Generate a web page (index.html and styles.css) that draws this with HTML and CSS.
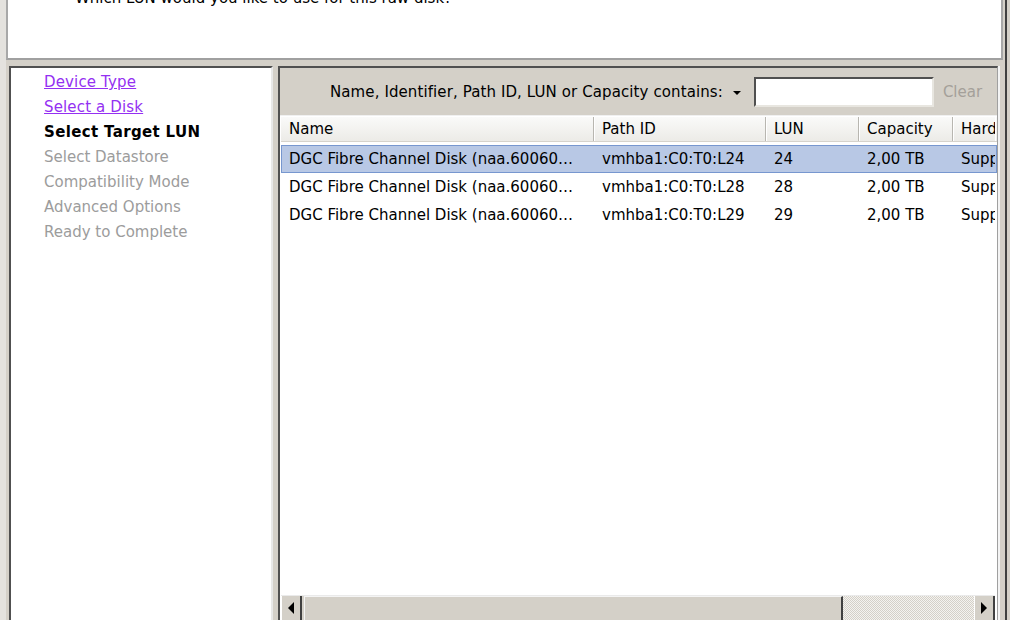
FILE: index.html
```html
<!DOCTYPE html>
<html>
<head>
<meta charset="utf-8">
<link rel="stylesheet" href="styles.css">
</head>
<body>
<div class="window">
  <header class="header">
    <p class="question">Which LUN would you like to use for this raw disk?</p>
  </header>
  <div class="main">
    <nav class="steps">
      <a class="step link" href="#">Device Type</a>
      <a class="step link" href="#">Select a Disk</a>
      <span class="step current">Select Target LUN</span>
      <span class="step disabled">Select Datastore</span>
      <span class="step disabled">Compatibility Mode</span>
      <span class="step disabled">Advanced Options</span>
      <span class="step disabled">Ready to Complete</span>
    </nav>
    <section class="panel">
      <div class="filterbar">
        <span class="filter-label">Name, Identifier, Path ID, LUN or Capacity contains:</span>
        <span class="dropdown-arrow"></span>
        <input class="filter-input" type="text">
        <span class="clear">Clear</span>
      </div>
      <div class="table">
        <div class="thead">
          <div class="th c-name">Name</div>
          <div class="th c-path">Path ID</div>
          <div class="th c-lun">LUN</div>
          <div class="th c-cap">Capacity</div>
          <div class="th c-hw">Hardware Acceleration</div>
        </div>
        <div class="rows">
          <div class="row selected">
            <div class="td c-name">DGC Fibre Channel Disk (naa.60060…</div>
            <div class="td c-path">vmhba1:C0:T0:L24</div>
            <div class="td c-lun">24</div>
            <div class="td c-cap">2,00 TB</div>
            <div class="td c-hw">Supported</div>
          </div>
          <div class="row">
            <div class="td c-name">DGC Fibre Channel Disk (naa.60060…</div>
            <div class="td c-path">vmhba1:C0:T0:L28</div>
            <div class="td c-lun">28</div>
            <div class="td c-cap">2,00 TB</div>
            <div class="td c-hw">Supported</div>
          </div>
          <div class="row">
            <div class="td c-name">DGC Fibre Channel Disk (naa.60060…</div>
            <div class="td c-path">vmhba1:C0:T0:L29</div>
            <div class="td c-lun">29</div>
            <div class="td c-cap">2,00 TB</div>
            <div class="td c-hw">Supported</div>
          </div>
        </div>
        <div class="hscroll">
          <div class="sbtn left"><span class="tri-left"></span></div>
          <div class="thumb"></div>
          <div class="track"></div>
          <div class="sbtn right"><span class="tri-right"></span></div>
        </div>
      </div>
    </section>
  </div>
</div>
</body>
</html>
```

FILE: styles.css
```css
html, body {
  margin: 0;
  padding: 0;
}
body {
  width: 1010px;
  height: 620px;
  overflow: hidden;
  background: #e2e0dc;
  font-family: "DejaVu Sans", Tahoma, sans-serif;
  font-size: 15px;
  color: #000;
}
.window {
  width: 1010px;
  height: 620px;
  display: flex;
  flex-direction: column;
  background: #d4d0c8;
  border-left: 6px solid #e4e2de;
  box-sizing: border-box;
  border-right: 3px solid #d4d0c8;
  box-shadow: inset -2px 0 0 #404040;
}
.header {
  height: 60px;
  width: 997px;
  box-sizing: border-box;
  background: #fff;
  border-left: 2px solid #a8a8a8;
  border-right: 2px solid #a8a8a8;
  border-bottom: 2px solid #a0a0a0;
  overflow: hidden;
  flex: none;
}
.question {
  margin: -11px 0 0 67px;
  line-height: 18px;
  white-space: nowrap;
}
.main {
  flex: 1;
  display: flex;
  gap: 5px;
  padding: 6px 0 0 3px;
  min-height: 0;
}
.steps {
  width: 264px;
  box-sizing: border-box;
  background: #fff;
  border-top: 2px solid #505050;
  border-left: 2px solid #505050;
  border-right: 2px solid #e8e8e8;
  display: flex;
  flex-direction: column;
  padding: 2px 0 0 33px;
  flex: none;
}
.step {
  line-height: 25px;
  white-space: nowrap;
}
.link {
  color: #9430f2;
  text-decoration: underline;
  letter-spacing: 0.15px;
}
.current {
  font-weight: bold;
  letter-spacing: 0.35px;
}
.disabled {
  color: #9c9c9c;
}
.panel {
  width: 720px;
  box-sizing: border-box;
  border-top: 2px solid #505050;
  border-left: 2px solid #505050;
  border-right: 1px solid #a0a0a0;
  display: flex;
  flex-direction: column;
  flex: none;
  background: #fff;
  box-shadow: 2px 0 0 #f4f4f4;
}
.filterbar {
  height: 48px;
  flex: none;
  background: #d4d0c8;
  display: flex;
  align-items: center;
  padding-left: 50px;
  box-sizing: border-box;
  border-bottom: 1px solid #f0f0f0;
}
.filter-label {
  white-space: nowrap;
  color: #000;
  letter-spacing: 0.1px;
}
.dropdown-arrow {
  width: 0;
  height: 0;
  border-left: 4px solid transparent;
  border-right: 4px solid transparent;
  border-top: 4px solid #000;
  margin: 2px 0 0 10px;
}
.filter-input {
  width: 180px;
  height: 30px;
  box-sizing: border-box;
  margin: 0 0 0 13px;
  padding: 0;
  border: 2px solid;
  border-color: #505050 #e8e6e0 #e8e6e0 #505050;
  background: #fff;
  outline: none;
}
.clear {
  color: #a4a09a;
  margin-left: 9px;
}
.table {
  flex: 1;
  display: flex;
  flex-direction: column;
  min-height: 0;
  background: #fff;
  padding-left: 1px;
}
.thead {
  height: 24px;
  flex: none;
  display: flex;
  background: linear-gradient(#fafaf9, #ecebe7);
  border-bottom: 1px solid #d6d3cc;
  margin-top: 1px;
  overflow: hidden;
}
.th {
  line-height: 24px;
  box-sizing: border-box;
  padding-left: 8px;
  white-space: nowrap;
  overflow: hidden;
  flex: none;
  border-right: 1px solid #b8b6b0;
  box-shadow: 1px 0 0 #fff;
}
.td {
  box-sizing: border-box;
  padding-left: 8px;
  white-space: nowrap;
  overflow: hidden;
  flex: none;
}
.c-name { width: 313px; }
.row .c-name { width: 312px; padding-left: 7px; }
.c-path { width: 172px; }
.c-lun { width: 93px; }
.c-cap { width: 94px; }
.c-hw { width: 42px; border-right: none; }
.rows {
  flex: 1;
  padding-top: 3px;
}
.row {
  display: flex;
  height: 28px;
  line-height: 26px;
  box-sizing: border-box;
  border: 1px solid transparent;
}
.row.selected {
  background: #b8c8e5;
  border-color: #7797cf;
}
.hscroll {
  height: 24px;
  flex: none;
  display: flex;
  background: #d4d0c8;
  border-top: 1px solid #eaeaea;
  margin-right: 2px;
}
.sbtn {
  width: 21px;
  box-sizing: border-box;
  background: #d4d0c8;
  border-right: 2px solid #404040;
  border-left: 1px solid #fff;
  display: flex;
  align-items: center;
  justify-content: center;
  flex: none;
}
.tri-left {
  width: 0;
  height: 0;
  border-top: 6px solid transparent;
  border-bottom: 6px solid transparent;
  border-right: 6px solid #000;
}
.tri-right {
  width: 0;
  height: 0;
  border-top: 6px solid transparent;
  border-bottom: 6px solid transparent;
  border-left: 6px solid #000;
}
.thumb {
  width: 539px;
  flex: none;
  box-sizing: border-box;
  margin-left: 2px;
  background: #d4d0c8;
  border-left: 1px solid #f4f4f4;
  border-top: 1px solid #f4f4f4;
  border-right: 2px solid #404040;
}
.track {
  flex: 1;
  background-color: #f4f3f0;
  background-image:
    linear-gradient(45deg, #d4d0c8 25%, transparent 25%, transparent 75%, #d4d0c8 75%),
    linear-gradient(45deg, #d4d0c8 25%, transparent 25%, transparent 75%, #d4d0c8 75%);
  background-size: 2px 2px;
  background-position: 0 0, 1px 1px;
}
```
